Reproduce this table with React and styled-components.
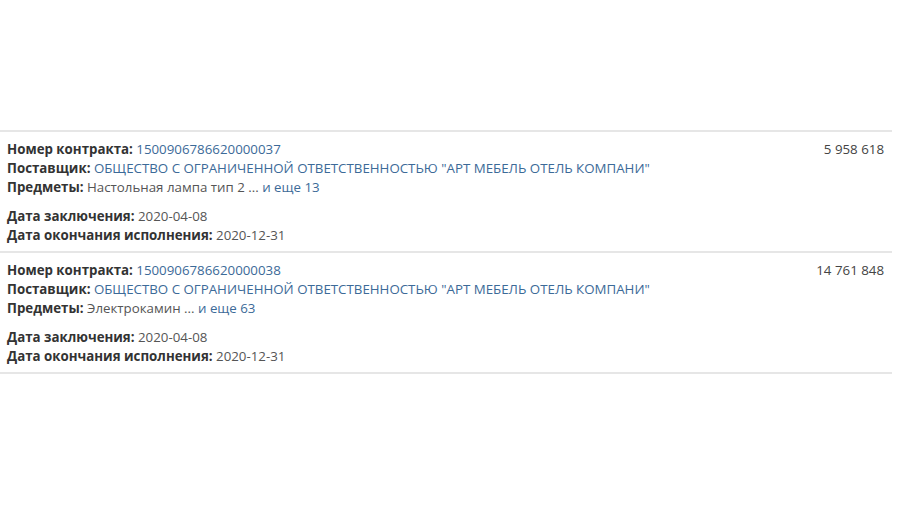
import React from 'react';
import styled, { createGlobalStyle } from 'styled-components';

const GlobalStyle = createGlobalStyle`
  html, body {
    margin: 0;
    padding: 0;
    background: #fff;
  }
  body {
    font-family: "Open Sans", "Liberation Sans", sans-serif;
    font-size: 13.3px;
    color: #333;
  }
`;

const contracts = [
  {
    number: '1500906786620000037',
    supplier: 'ОБЩЕСТВО С ОГРАНИЧЕННОЙ ОТВЕТСТВЕННОСТЬЮ "АРТ МЕБЕЛЬ ОТЕЛЬ КОМПАНИ"',
    item: 'Настольная лампа тип 2 ...',
    more: 'и еще 13',
    signed: '2020-04-08',
    ends: '2020-12-31',
    amount: '5 958 618',
  },
  {
    number: '1500906786620000038',
    supplier: 'ОБЩЕСТВО С ОГРАНИЧЕННОЙ ОТВЕТСТВЕННОСТЬЮ "АРТ МЕБЕЛЬ ОТЕЛЬ КОМПАНИ"',
    item: 'Электрокамин ...',
    more: 'и еще 63',
    signed: '2020-04-08',
    ends: '2020-12-31',
    amount: '14 761 848',
  },
];

const Page = styled.div`
  width: 892px;
  padding-top: 130px;
`;

const List = styled.div`
  border-top: 2px solid #e6e6e6;
`;

const Row = styled.div`
  display: flex;
  justify-content: space-between;
  padding: 8px 8px 6px 7px;
  border-bottom: 2px solid #e6e6e6;
`;

const Info = styled.div`
  display: flex;
  flex-direction: column;
  gap: 10px;
`;

const Group = styled.div`
  display: flex;
  flex-direction: column;
`;

const Line = styled.div`
  line-height: 19px;
  white-space: nowrap;
`;

const Label = styled.span`
  font-weight: 700;
  color: #333;
`;

const Value = styled.span`
  color: ${(p) => (p.link ? '#3c6a98' : '#555')};
`;

const Amount = styled.div`
  line-height: 19px;
  color: #444;
`;

function App() {
  return (
    <Page>
      <GlobalStyle />
      <List>
        {contracts.map((c) => (
          <Row key={c.number}>
            <Info>
              <Group>
                <Line>
                  <Label>Номер контракта: </Label>
                  <Value link>{c.number}</Value>
                </Line>
                <Line>
                  <Label>Поставщик: </Label>
                  <Value link>{c.supplier}</Value>
                </Line>
                <Line>
                  <Label>Предметы: </Label>
                  <Value>{c.item} </Value>
                  <Value link>{c.more}</Value>
                </Line>
              </Group>
              <Group>
                <Line>
                  <Label>Дата заключения: </Label>
                  <Value>{c.signed}</Value>
                </Line>
                <Line>
                  <Label>Дата окончания исполнения: </Label>
                  <Value>{c.ends}</Value>
                </Line>
              </Group>
            </Info>
            <Amount>{c.amount}</Amount>
          </Row>
        ))}
      </List>
    </Page>
  );
}

export default App;
